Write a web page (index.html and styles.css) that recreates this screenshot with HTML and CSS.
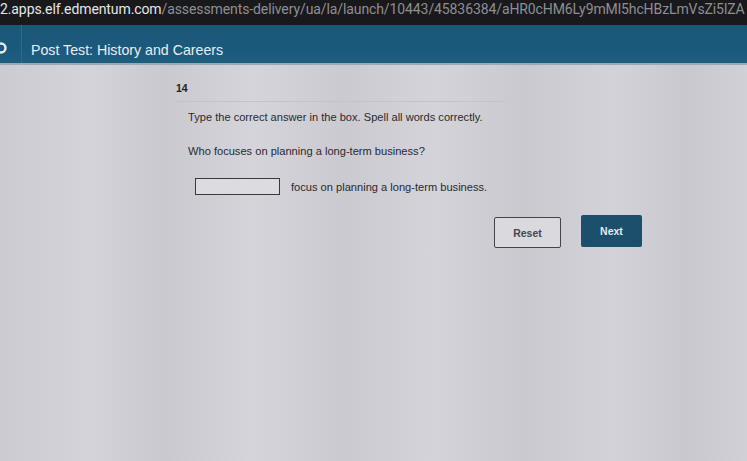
FILE: index.html
```html
<!DOCTYPE html>
<html>
<head>
<meta charset="utf-8">
<link rel="stylesheet" href="styles.css">
</head>
<body>
<div class="urlbar"><span class="host">2.apps.elf.edmentum.com</span><span class="path">/assessments-delivery/ua/la/launch/10443/45836384/aHR0cHM6Ly9mMl5hcHBzLmVsZi5lZA</span></div>
<header class="topbar">
  <div class="back"><svg width="10" height="14" viewBox="0 0 10 14"><circle cx="1" cy="7" r="4.5" fill="none" stroke="#e8eef2" stroke-width="2.4"/></svg></div>
  <div class="title">Post Test: History and Careers</div>
</header>
<main class="content">
  <div class="qnum">14</div>
  <div class="rule"></div>
  <p class="instr">Type the correct answer in the box. Spell all words correctly.</p>
  <p class="question">Who focuses on planning a long-term business?</p>
  <div class="answer-row">
    <span class="box"></span>
    <span class="rest">focus on planning a long-term business.</span>
  </div>
  <div class="buttons">
    <button class="btn reset">Reset</button>
    <button class="btn next">Next</button>
  </div>
</main>
</body>
</html>
```

FILE: styles.css
```css
html, body {
  margin: 0;
  padding: 0;
  width: 747px;
  height: 461px;
  overflow: hidden;
  font-family: "Liberation Sans", Arial, sans-serif;
}
body {
  background: linear-gradient(90deg, #cbcbd1 0%, #d3d3d9 12%, #c9c9cf 22%, #d4d4da 34%, #cacad0 46%, #d3d3d9 58%, #c9c9cf 70%, #d2d2d8 82%, #c8c8ce 92%, #d0d0d6 100%);
}
.urlbar {
  width: 747px;
  height: 25px;
  background: #19191c;
  font-family: "Roboto", "Liberation Sans", sans-serif;
  font-size: 14px;
  line-height: 19px;
  white-space: nowrap;
  overflow: hidden;
  letter-spacing: -0.1px;
}
.host { color: #e6e6e8; }
.path { color: #8d8f95; }
.topbar {
  height: 38px;
  background: linear-gradient(180deg, #1c5676 0%, #1b5a7c 70%, #1d5f80 100%);
  display: flex;
  align-items: center;
  border-bottom: 2px solid #9aa9b4;
}
.back {
  width: 22px;
  height: 100%;
  border-right: 1px solid #2f6a8a;
  display: flex;
  align-items: center;
  padding-top: 8px;
  box-sizing: border-box;
}
.title {
  margin-left: 9px;
  color: #e8eef3;
  font-size: 14.2px;
  padding-top: 11px;
}
.content {
  padding-left: 176px;
  color: #2a2a2e;
  font-size: 11.1px;
}
.qnum {
  font-weight: bold;
  font-size: 10.5px;
  margin-top: 17px;
  color: #222226;
}
.rule {
  width: 330px;
  height: 1px;
  background: #c3c3c9;
  margin-top: 7px;
}
.instr {
  margin: 9px 0 0 12px;
}
.question {
  margin: 22px 0 0 12px;
}
.answer-row {
  display: flex;
  align-items: center;
  margin: 21px 0 0 19px;
}
.box {
  width: 83px;
  height: 15px;
  border: 1.5px solid #3a3a3e;
  background: #dcdce0;
  display: inline-block;
}
.rest {
  margin-left: 11px;
}
.buttons {
  display: flex;
  gap: 20px;
  align-items: center;
  margin: 19px 0 0 318px;
}
.btn {
  font-family: "Liberation Sans", Arial, sans-serif;
  font-weight: bold;
  font-size: 10.5px;
  border-radius: 2px;
  padding: 0;
}
.reset {
  width: 67px;
  height: 31px;
  background: #d9d9de;
  border: 1.5px solid #44444a;
  color: #46464c;
  margin-top: 3px;
}
.next {
  width: 61px;
  height: 32px;
  background: #1c4f6c;
  border: none;
  color: #e4ecf2;
}
```
